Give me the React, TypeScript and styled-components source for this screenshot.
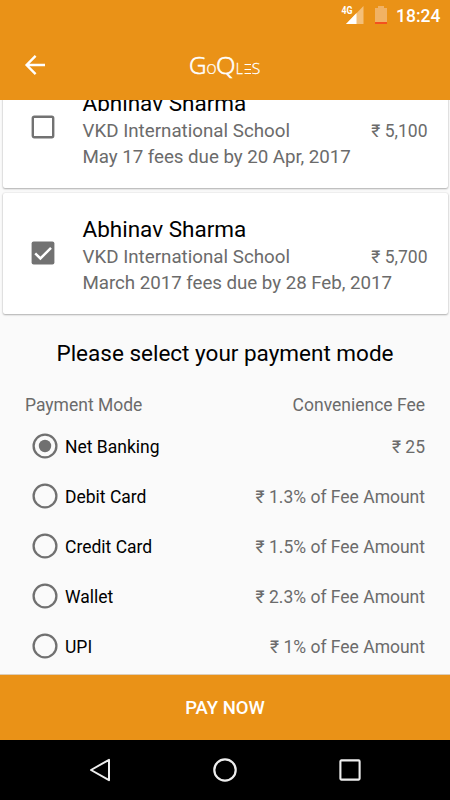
import React, { useState } from "react";
import styled, { createGlobalStyle } from "styled-components";

const ORANGE = "#ea9217";
const GREY = "#6b6b6b";

const GlobalStyle = createGlobalStyle`
  * { box-sizing: border-box; }
  body { margin: 0; background: #fafafa; font-family: Roboto, "Noto Sans", sans-serif; }
  button { font-family: inherit; border: 0; padding: 0; background: none; cursor: pointer; }
`;

const Screen = styled.div`
  width: 450px;
  height: 800px;
  overflow: hidden;
  display: flex;
  flex-direction: column;
  background: #fafafa;
`;

const StatusBar = styled.div`
  height: 30px;
  flex: none;
  display: flex;
  justify-content: flex-end;
  align-items: center;
  padding-right: 10px;
  background: ${ORANGE};
  color: #fff;
`;

const StatusIcons = styled.svg`
  width: 52px;
  height: 30px;
  margin-right: 2px;
`;

const Clock = styled.time`
  font-size: 17.5px;
  font-weight: 500;
  line-height: 30px;
  width: 45px;
  padding: 1px 0 0 1px;
  white-space: nowrap;
`;

const AppBar = styled.header`
  height: 70px;
  flex: none;
  display: grid;
  grid-template-columns: 70px 1fr 70px;
  align-items: center;
  justify-items: center;
  background: ${ORANGE};
`;

const Icon = styled.svg`
  display: block;
  overflow: visible;
`;

const Logo = styled.svg`
  width: 72px;
  height: 44px;
  display: block;
  overflow: visible;
  fill: #fff;
  font-family: "Open Sans", "Noto Sans", sans-serif;
  font-weight: 300;
`;

const CardList = styled.section`
  height: 222px;
  flex: none;
  overflow: hidden;
  display: flex;
  flex-direction: column;
  justify-content: flex-end;
  gap: 5px;
  padding: 0 2.5px 8px;
`;

const Card = styled.article`
  height: 121px;
  flex: none;
  display: grid;
  grid-template-columns: 80px minmax(0, 1fr) auto;
  align-items: center;
  padding-right: 20px;
  background: #fff;
  border-radius: 2px;
  box-shadow: 0 1px 2px rgba(0, 0, 0, 0.28), 0 0 2px rgba(0, 0, 0, 0.14);
`;

const IconButton = styled.button`
  display: flex;
  justify-content: center;
`;

const CheckButton = styled(IconButton)`
  && { padding-bottom: 1px; }
`;

const Details = styled.div`
  color: ${GREY};
  font-size: 18.75px;
  line-height: 26px;
  white-space: nowrap;
  padding-top: 5px;
`;

const Student = styled.h2`
  margin: 0 0 1px;
  color: #000;
  font-size: 22.5px;
  font-weight: 400;
  line-height: 27px;
`;

const DueDate = styled.div`
  letter-spacing: -0.05px;
`;

const Amount = styled.span`
  color: ${GREY};
  font-size: 17.5px;
  line-height: 26px;
  padding-top: 7px;
  white-space: nowrap;
`;

const Payment = styled.main`
  height: 352px;
  flex: none;
  display: flex;
  flex-direction: column;
  padding: 0 25px;
`;

const Title = styled.h1`
  margin: 15px 0 0;
  font-size: 22.5px;
  font-weight: 400;
  line-height: 32px;
  text-align: center;
  white-space: nowrap;
`;

const TableHead = styled.div`
  display: flex;
  justify-content: space-between;
  margin: 22px 0 2px;
  height: 28px;
  line-height: 28px;
  font-size: 17.5px;
  color: ${GREY};
`;

const ModeRow = styled.label`
  height: 50px;
  flex: none;
  display: flex;
  align-items: center;
  padding-left: 7px;
  font-size: 17.5px;
  cursor: pointer;
`;

const ModeName = styled.span`
  margin-left: 7px;
  padding-top: 1px;
  flex: 1;
  color: #000;
`;

const Fee = styled.span`
  padding-top: 1px;
  color: ${GREY};
`;

const PayButton = styled.button`
  && { background: ${ORANGE}; border-top: 1px solid #dccdb8; }
  height: 66px;
  flex: none;
  color: #fff;
  font-size: 18.5px;
  font-weight: 500;
`;

const NavBar = styled.nav`
  height: 60px;
  flex: none;
  display: grid;
  grid-template-columns: repeat(3, 125px);
  justify-content: center;
  align-items: center;
  justify-items: center;
  background: #000;
`;

const Checkbox = ({ checked }: { checked: boolean }) => (
  <Icon width="24" height="24" viewBox="0 0 24 24" fill="none">
    {checked ? (
      <>
        <rect x="0.6" y="0.6" width="22.8" height="22.8" rx="2" fill="#727272" />
        <path d="M4.2 12.3l5.2 5.2L20 6.8" stroke="#fff" strokeWidth="2.5" />
      </>
    ) : (
      <rect x="1.8" y="1.8" width="20.4" height="20.4" rx="1.4" stroke="#727272" strokeWidth="2.4" />
    )}
  </Icon>
);

const Radio = ({ selected }: { selected: boolean }) => (
  <Icon width="26" height="26" viewBox="0 0 26 26" fill="none">
    <circle cx="13" cy="13" r="11.4" stroke="#707070" strokeWidth="2.3" />
    {selected && <circle cx="13" cy="13" r="6.2" fill="#707070" />}
  </Icon>
);

const fees = [
  { name: "Abhinav Sharma", school: "VKD International School", due: "May 17 fees due by 20 Apr, 2017", amount: "₹ 5,100" },
  { name: "Abhinav Sharma", school: "VKD International School", due: "March 2017 fees due by 28 Feb, 2017", amount: "₹ 5,700" },
];

const modes = [
  { name: "Net Banking", fee: "₹ 25" },
  { name: "Debit Card", fee: "₹ 1.3% of Fee Amount" },
  { name: "Credit Card", fee: "₹ 1.5% of Fee Amount" },
  { name: "Wallet", fee: "₹ 2.3% of Fee Amount" },
  { name: "UPI", fee: "₹ 1% of Fee Amount" },
];

export default function App() {
  const [checked, setChecked] = useState([false, true]);
  const [mode, setMode] = useState(0);

  return (
    <Screen>
      <GlobalStyle />
      <StatusBar>
        <StatusIcons viewBox="0 0 52 30">
          <text x="0.5" y="14" fill="#fff" fontSize="10.5" fontWeight="700" textLength="11" lengthAdjust="spacingAndGlyphs">4G</text>
          <path d="M22.5 6v18H5z" fill="#f4bf78" />
          <path d="M15.5 13v11H5z" fill="#fff" />
          <path d="M34 8h3V6h6v2h3v14H34z" fill="#f1b264" />
          <rect x="34" y="22" width="12" height="2" fill="#f4511e" />
        </StatusIcons>
        <Clock>18:24</Clock>
      </StatusBar>
      <AppBar>
        <IconButton aria-label="Back">
          <Icon width="20" height="20" viewBox="0 0 20 20" fill="none" stroke="#fff" strokeWidth="2.4">
            <path d="M20 10H2M10.6 .9L1.6 10l9 9.1" />
          </Icon>
        </IconButton>
        <Logo viewBox="0 0 72 44" stroke="#fff" strokeWidth="0.6">
          <text x="0" y="31" fontSize="24.5" textLength="17.5" lengthAdjust="spacingAndGlyphs">G</text>
          <text x="17.3" y="31" fontSize="17.5" textLength="10.5" lengthAdjust="spacingAndGlyphs" strokeWidth="0.2">o</text>
          <text x="27" y="31" fontSize="24.5" textLength="19.5" lengthAdjust="spacingAndGlyphs">Q</text>
          <text x="46.8" y="31" fontSize="13.8" strokeWidth="0.3">L</text>
          <path d="M55.5 21.5h6.5M55.5 26.5h6.5M55.5 30.5h6.5" strokeWidth="1" />
          <text x="62.7" y="31" fontSize="13.8" textLength="8.5" lengthAdjust="spacingAndGlyphs" strokeWidth="0.3">S</text>
        </Logo>
      </AppBar>
      <CardList>
        {fees.map((fee, i) => (
          <Card key={fee.due}>
            <CheckButton
              role="checkbox"
              aria-checked={checked[i]}
              onClick={() => setChecked(checked.map((c, j) => (j === i ? !c : c)))}
            >
              <Checkbox checked={checked[i]} />
            </CheckButton>
            <Details>
              <Student>{fee.name}</Student>
              <div>{fee.school}</div>
              <DueDate>{fee.due}</DueDate>
            </Details>
            <Amount>{fee.amount}</Amount>
          </Card>
        ))}
      </CardList>
      <Payment>
        <Title>Please select your payment mode</Title>
        <TableHead>
          <span>Payment Mode</span>
          <span>Convenience Fee</span>
        </TableHead>
        {modes.map((m, i) => (
          <ModeRow key={m.name} onClick={() => setMode(i)}>
            <Radio selected={mode === i} />
            <ModeName>{m.name}</ModeName>
            <Fee>{m.fee}</Fee>
          </ModeRow>
        ))}
      </Payment>
      <PayButton>PAY NOW</PayButton>
      <NavBar>
        <Icon width="22" height="24" viewBox="0 0 22 24" fill="none" stroke="#eee" strokeWidth="2" strokeLinejoin="round">
          <path d="M20 1.8v20.4L2 12z" />
        </Icon>
        <Icon width="24" height="24" viewBox="0 0 24 24" fill="none" stroke="#eee" strokeWidth="2.2">
          <circle cx="12" cy="12" r="10.7" />
        </Icon>
        <Icon width="22" height="22" viewBox="0 0 22 22" fill="none" stroke="#eee" strokeWidth="2.1">
          <rect x="1.4" y="1.4" width="19.2" height="19.2" rx="1" />
        </Icon>
      </NavBar>
    </Screen>
  );
}
